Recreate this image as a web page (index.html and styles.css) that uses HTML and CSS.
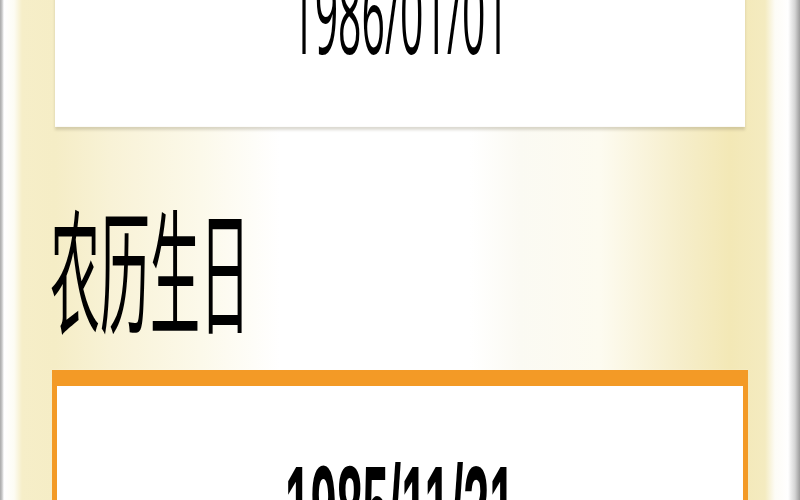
FILE: index.html
```html
<!DOCTYPE html>
<html lang="zh-CN">
<head>
<meta charset="utf-8">
<title>生日</title>
<link rel="stylesheet" href="styles.css">
</head>
<body>
  <div class="screen">
    <div class="field">
      <span class="value value-solar">1986/01/01</span>
    </div>
    <div class="label">农历生日</div>
    <div class="field field-active">
      <span class="value value-lunar">1985/11/21</span>
    </div>
  </div>
</body>
</html>
```

FILE: styles.css
```css
html, body {
  margin: 0;
  padding: 0;
  width: 800px;
  height: 500px;
  overflow: hidden;
}

body {
  background: linear-gradient(90deg,
    #a8a8a8 0px, #c8c8c8 2px, #ffffff 4px, #fdfcf4 14px,
    #f6eec8 22px, #f5edc6 55px, #f8f2d6 110px, #fcf9ea 200px,
    #ffffff 280px, #ffffff 470px, #fbfaf3 520px, #fdfbf0 600px,
    #f6eecb 680px, #f3e8b6 730px, #f4ebc0 765px, #fdfcf6 775px,
    #ffffff 788px, #d4d4d4 795px, #9c9c9c 800px);
}

/* the form is drawn at phone proportions and stretched to fill the frame */
.screen {
  width: 800px;
  transform: scaleY(2.7);
  transform-origin: top left;
  display: flex;
  flex-direction: column;
  padding: 0 55px;
  box-sizing: border-box;
}

.field {
  background: #ffffff;
  display: flex;
  justify-content: center;
  box-shadow: 0 1px 1.5px rgba(120, 110, 80, 0.25);
}

.field:first-child {
  margin-top: -52.6px;
  padding: 36.9px 0 22.1px;
}

.value {
  display: block;
  color: #000;
}

.value-solar {
  font-family: "Open Sans", "Liberation Sans", sans-serif;
  font-size: 41px;
  line-height: 41px;
  height: 41px;
}

.label {
  margin-top: 25.2px;
  margin-left: -5px;
  height: 52.4px;
  font-family: "Noto Sans CJK SC", "Noto Sans", sans-serif;
  font-size: 50px;
  line-height: 50px;
  color: #000;
}

.field-active {
  margin: 12px -3px 0;
  border: 5px solid #f39a26;
  border-top-width: 6.5px;
  padding-top: 23.4px;
  height: 80px;
  box-shadow: none;
}

.value-lunar {
  font-family: "Liberation Sans", Arial, sans-serif;
  font-weight: bold;
  font-size: 46.5px;
  line-height: 47px;
  height: 47px;
}
```
